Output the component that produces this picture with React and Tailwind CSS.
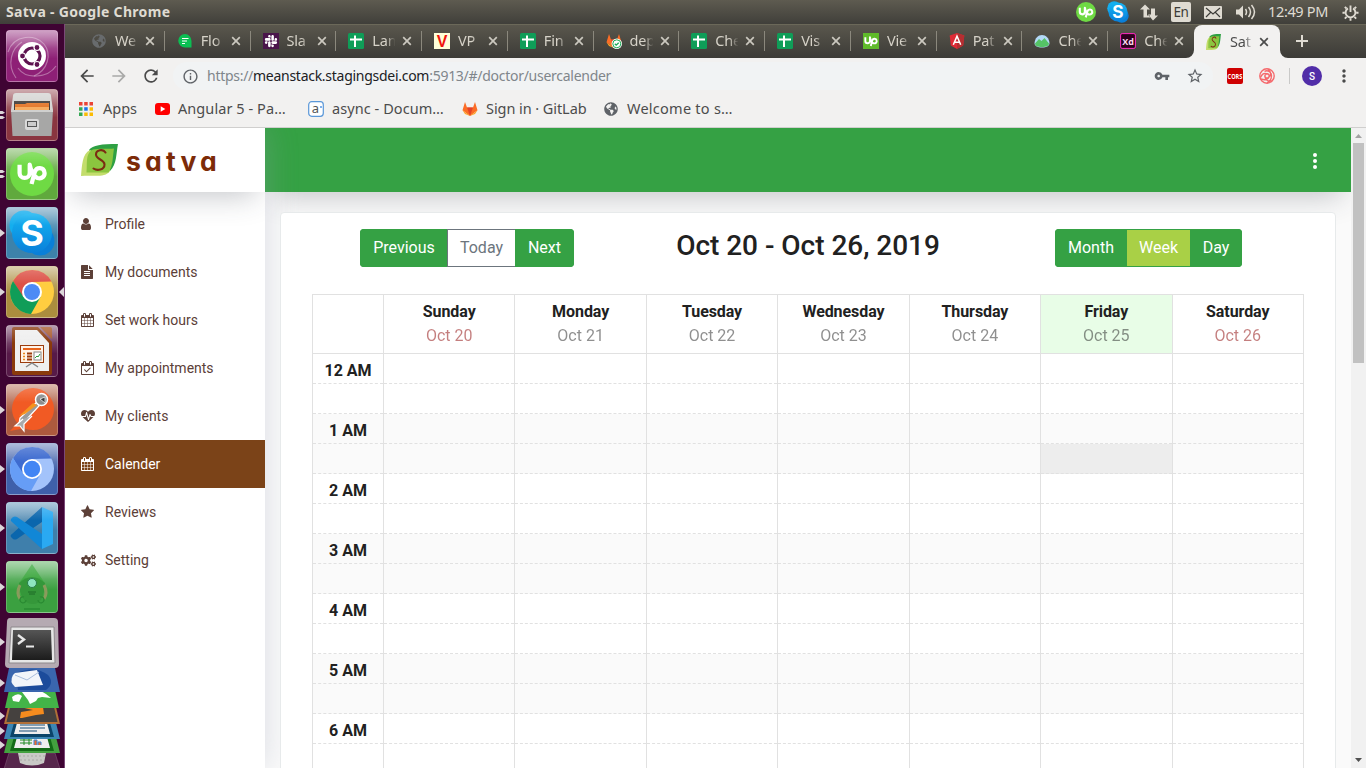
import React from "react";
import { FaSlack, FaCogs, FaGlobeAmericas } from "react-icons/fa";
import { MdArrowBack, MdArrowForward, MdRefresh, MdInfoOutline, MdVpnKey, MdStarBorder, MdMoreVert } from "react-icons/md";

const PATHS = {
  user: "M1536 1399q0 109-62.5 187t-150.5 78h-854q-88 0-150.5-78t-62.5-187q0-85 8.5-160.5t31.5-152 58.5-131 94-89 134.5-34.5q131 128 313 128t313-128q76 0 134.5 34.5t94 89 58.5 131 31.5 152 8.5 160.5zm-256-887q0 159-112.5 271.5t-271.5 112.5-271.5-112.5-112.5-271.5 112.5-271.5 271.5-112.5 271.5 112.5 112.5 271.5z",
  file: "M1596 476q14 14 28 36h-472v-472q22 14 36 28zm-476 164h544v1056q0 40-28 68t-68 28h-1344q-40 0-68-28t-28-68v-1600q0-40 28-68t68-28h800v544q0 40 28 68t68 28zm160 736v-64q0-14-9-23t-23-9h-704q-14 0-23 9t-9 23v64q0 14 9 23t23 9h704q14 0 23-9t9-23zm0-256v-64q0-14-9-23t-23-9h-704q-14 0-23 9t-9 23v64q0 14 9 23t23 9h704q14 0 23-9t9-23zm0-256v-64q0-14-9-23t-23-9h-704q-14 0-23 9t-9 23v64q0 14 9 23t23 9h704q14 0 23-9t9-23z",
  calendar: "M192 1664h288v-288h-288v288zm352 0h320v-288h-320v288zm-352-352h288v-320h-288v320zm352 0h320v-320h-320v320zm-352-384h288v-288h-288v288zm736 736h320v-288h-320v288zm-384-736h320v-288h-320v288zm768 736h288v-288h-288v288zm-384-352h320v-320h-320v320zm-352-864v-288q0-13-9.5-22.5t-22.5-9.5h-64q-13 0-22.5 9.5t-9.5 22.5v288q0 13 9.5 22.5t22.5 9.5h64q13 0 22.5-9.5t9.5-22.5zm736 864h288v-320h-288v320zm-384-384h320v-288h-320v288zm384 0h288v-288h-288v288zm32-480v-288q0-13-9.5-22.5t-22.5-9.5h-64q-13 0-22.5 9.5t-9.5 22.5v288q0 13 9.5 22.5t22.5 9.5h64q13 0 22.5-9.5t9.5-22.5zm384-64v1280q0 52-38 90t-90 38h-1408q-52 0-90-38t-38-90v-1280q0-52 38-90t90-38h128v-96q0-66 47-113t113-47h64q66 0 113 47t47 113v96h384v-96q0-66 47-113t113-47h64q66 0 113 47t47 113v96h128q52 0 90 38t38 90z",
  check: "M192 1664h1408v-1024h-1408v1024zm384-1216v-288q0-13-9.5-22.5t-22.5-9.5h-64q-13 0-22.5 9.5t-9.5 22.5v288q0 13 9.5 22.5t22.5 9.5h64q13 0 22.5-9.5t9.5-22.5zm768 0v-288q0-13-9.5-22.5t-22.5-9.5h-64q-13 0-22.5 9.5t-9.5 22.5v288q0 13 9.5 22.5t22.5 9.5h64q13 0 22.5-9.5t9.5-22.5zm384-64v1280q0 52-38 90t-90 38h-1408q-52 0-90-38t-38-90v-1280q0-52 38-90t90-38h128v-96q0-66 47-113t113-47h64q66 0 113 47t47 113v96h384v-96q0-66 47-113t113-47h64q66 0 113 47t47 113v96h128q52 0 90 38t38 90zM1303 935l-512 512q-10 9-23 9t-23-9l-288-288q-9-10-9-23t9-22l46-46q9-9 22-9t23 9l220 220 444-444q10-9 23-9t22 9l46 46q9 9 9 22t-9 23z",
  star: "M1728 647q0 22-26 48l-363 354 86 500q1 7 1 20 0 21-10.5 35.5t-30.5 14.5q-19 0-40-12l-449-236-449 236q-22 12-40 12-21 0-31.5-14.5t-10.5-35.5q0-6 2-20l86-500-364-354q-25-27-25-48 0-37 56-46l502-73 225-455q19-41 49-41t49 41l225 455 502 73q56 9 56 46z",
  heart: "M1280 1024h305q-5 6-10 10.5t-9 7.5l-3 4-623 600q-18 18-44 18t-44-18l-624-602q-5-2-21-20h369q22 0 39.5-13.5t22.5-34.5l70-281 190 667q6 20 23 33t39 13q21 0 38-13t23-33l146-485 56 112q18 35 57 35zm512-428q0 145-103 300h-369l-111-221q-8-17-25.5-27t-36.5-8q-45 5-56 46l-129 430-196-686q-6-20-23.5-33t-39.5-13-39 13.5-22 34.5l-116 464h-423q-103-155-103-300 0-220 127-344t351-124q62 0 126.5 21.5t120 58 95.5 68.5 76 68q36-36 76-68t95.5-68.5 120-58 126.5-21.5q224 0 351 124t127 344z",
};

const VIEW = {
  user: "256 0 1792 1792",
  file: "128 0 1792 1792",
  calendar: "64 0 1792 1792",
  check: "64 0 1792 1792",
  star: "64 0 1792 1792",
  heart: "0 0 1792 1792",
};

function MenuIcon({ name }) {
  if (name === "cogs") return <FaCogs className="h-[15px] w-[15px]" />;
  return (
    <svg viewBox={VIEW[name]} className="h-[14px] w-[14px]" fill="currentColor" fillRule="evenodd">
      <path d={PATHS[name]} />
    </svg>
  );
}

/* ---------- favicons ---------- */

function Leaf({ className }) {
  return (
    <svg viewBox="0 0 37 32" className={className} preserveAspectRatio="none">
      <path d="M8 6C12 1 20 0 37 0C35 10 36 20 29 27L12 24Z" fill="#2ea043" />
      <path d="M0 32C1 22 1 10 9 6L24 14L29 27C24 34 14 31 0 32Z" fill="#c3dd6c" />
      <path d="M5.500 28.500C6.500 20 4 9 12 5.500C18 4 26 5 33 4.500C31.500 14 32 22 27.500 28.500Z" fill="#8bc53f" />
      <path d="M24.500 8.500C22 4.500 15 6 15 10.500C15 15.500 23.500 15.500 23.500 20.500C23.500 26 16 27 12.500 24.500" fill="none" stroke="#7c2b12" strokeWidth="2.100" strokeLinecap="round" />
    </svg>
  );
}

const Sheets = () => (
  <svg viewBox="0 0 16 16" className="h-4 w-4">
    <rect width="16" height="16" rx="1.500" fill="#0f9d58" />
    <path d="M2 6.500h12M7 2.500v11.500" stroke="#fff" strokeWidth="2" />
  </svg>
);

function Favicon({ kind }) {
  switch (kind) {
    case "globe":
      return <FaGlobeAmericas className="h-[14px] w-[14px] text-[#686b6d]" />;
    case "chat":
      return (
        <svg viewBox="0 0 16 16" className="h-4 w-4">
          <path d="M8 1a6.700 6.700 0 1 0 0 13.500H14.500V8A6.700 6.700 0 0 0 8 1z" fill="#0bbf53" />
          <path d="M5 5.500h6.500M5 8h5M5 10.500h3" stroke="#fff" strokeWidth="1.200" />
        </svg>
      );
    case "slack":
      return (
        <span className="flex h-4 w-4 items-center justify-center bg-[#4a154b] text-white">
          <FaSlack className="h-[14px] w-[14px]" />
        </span>
      );
    case "sheets":
      return <Sheets />;
    case "vp":
      return (
        <svg viewBox="0 0 16 16" className="h-4 w-4">
          <rect width="16" height="16" fill="#ffffd9" />
          <text x="8" y="14" textAnchor="middle" fontFamily="Liberation Sans" fontWeight="bold" fontSize="16" fill="#f0140c">V</text>
        </svg>
      );
    case "gitlab":
      return <GitLab check />;
    case "up":
      return (
        <svg viewBox="0 0 16 16" className="h-4 w-4">
          <rect width="16" height="16" fill="#5fbb2a" />
          <UpMark x={8} y={7.5} s={0.42} />
        </svg>
      );
    case "angular":
      return (
        <svg viewBox="0 0 16 16" className="h-4 w-4">
          <path d="M8 0L15.300 2.600L14.200 12.500L8 16L1.800 12.500L.7 2.600z" fill="#dd2b36" />
          <path d="M8 0L15.300 2.600L14.200 12.500L8 16z" fill="#b52e31" />
          <path d="M4.300 11.800L8 3.200l3.700 8.600M5.800 9.300h4.400" fill="none" stroke="#fff" strokeWidth="1.500" />
        </svg>
      );
    case "mountain":
      return (
        <svg viewBox="0 0 16 16" className="h-4 w-4">
          <path d="M.5 10C1 5 4 2 8 2s7 3 7.500 8c0 3-3 4.500-7.500 4.500S.5 13 .5 10z" fill="#b3d9f7" />
          <path d="M1 10.500L5 6l2.500 2L10.500 5L15 10.500c0 2.500-3 3.500-7 3.500s-7-1-7-3.500z" fill="#55c366" />
        </svg>
      );
    case "xd":
      return (
        <svg viewBox="0 0 16 16" className="h-4 w-4">
          <rect x=".6" y=".6" width="14.800" height="14.800" rx="1.500" fill="#2e001e" stroke="#ff2bc2" />
          <text x="8" y="11.500" textAnchor="middle" fontFamily="Open Sans" fontWeight="bold" fontSize="9" fill="#ffd9f2">Xd</text>
        </svg>
      );
    default:
      return <Leaf className="h-4 w-[15px]" />;
  }
}

function GitLab({ check }) {
  return (
    <svg viewBox="0 0 16 16" className="h-4 w-4">
      <path d="M8 15L.5 9.300L3 1l2 5.500h6L13 1l2.500 8.300z" fill="#fc6d26" />
      <path d="M8 15L5 6.500h6z" fill="#e24329" />
      <path d="M.5 9.300L3 13 8 15zM15.500 9.300L13 13 8 15z" fill="#fca326" />
      {check && (
        <>
          <circle cx="10.800" cy="10.800" r="5.200" fill="#fff" />
          <circle cx="10.800" cy="10.800" r="4" fill="#fff" stroke="#1aaa55" strokeWidth="1" />
          <path d="M8.800 10.800l1.400 1.400 2.500-2.500" fill="none" stroke="#1aaa55" strokeWidth="1.300" />
        </>
      )}
    </svg>
  );
}

function UpMark({ x, y, s }) {
  return (
    <g transform={`translate(${x} ${y}) scale(${s})`} fill="none" stroke="#fff" strokeWidth="4.600" strokeLinecap="butt">
      <path d="M-13.500-8V1a5.500 5.500 0 0 0 11 0V-8C-1.500-2 2 5 6 6.500C11 8 14.500 4 13.500 0C12.500-5 5-6 3 0L-.5 13" strokeLinejoin="round" />
    </g>
  );
}

function SkypeMark() {
  return (
    <>
      <circle cx="18" cy="18" r="14.500" fill="#14aeee" />
      <circle cx="34" cy="34" r="14.500" fill="#0a7fd8" />
      <circle cx="26" cy="26" r="20" fill="url(#skype)" />
      <text x="26" y="39" textAnchor="middle" fontFamily="Inter" fontWeight="700" fontSize="36" fill="#fff">S</text>
    </>
  );
}

/* ---------- desktop launcher ---------- */

const TILES = [
  { bg: "bg-[#8e2076]", marks: 0, art: "ubuntu" },
  { bg: "bg-[#8a3540]", marks: 2, art: "files" },
  { bg: "bg-[#60a93d]", marks: 2, art: "upwork" },
  { bg: "bg-[#3d82aa]", marks: 1, art: "skype" },
  { bg: "bg-[#ab8d3e]", marks: 1, art: "chrome", active: true },
  { bg: "bg-[#571a48]", marks: 0, art: "impress" },
  { bg: "bg-[#ad5a3e]", marks: 1, art: "postman" },
  { bg: "bg-[#3f60aa]", marks: 1, art: "chromium" },
  { bg: "bg-[#3f7fab]", marks: 1, art: "code" },
  { bg: "bg-[#3ba040]", marks: 1, art: "robot" },
];

function Art({ kind }) {
  switch (kind) {
    case "ubuntu":
      return (
        <>
          <g fill="none" stroke="#fff" strokeOpacity=".35" strokeWidth="1.200">
            <path d="M2 22C8 4 30 4 38 14S42 40 28 46" />
            <path d="M10 48C0 34 6 18 16 12" />
            <path d="M50 36C42 48 20 50 12 38" />
          </g>
          <circle cx="26" cy="26" r="14" fill="#fff" />
          <circle cx="26" cy="26" r="8" fill="none" stroke="#5e1350" strokeWidth="3.200" />
          <g fill="#5e1350" stroke="#fff" strokeWidth="1.200"><circle cx="16.500" cy="26" r="3" /><circle cx="31" cy="17.500" r="3" /><circle cx="31" cy="34.500" r="3" /></g>
        </>
      );
    case "files":
      return (
        <>
          <path d="M7 7Q7 4 10 4h32q3 0 3 3l2 14H5z" fill="#d6d6d4" />
          <rect x="8" y="12" width="36" height="11" fill="#44403d" />
          <path d="M9 15h10l2-1h22v9H9z" fill="#e57a2e" />
          <path d="M9 18h34v4H9z" fill="#f7ad61" />
          <path d="M5 21h42l-1.500 26h-39z" fill="#a7a7a6" />
          <path d="M5 21h42v2H5z" fill="#d0d0ce" />
          <rect x="19" y="30" width="14" height="11" rx="2" fill="#d9d9d9" />
          <rect x="21.500" y="32.500" width="9" height="5" fill="#ccc" stroke="#555" />
        </>
      );
    case "upwork":
      return (
        <>
          <circle cx="26" cy="26" r="22" fill="#6fda44" />
          <UpMark x={26} y={24} s={0.92} />
        </>
      );
    case "skype":
      return <SkypeMark />;
    case "chrome":
      return (
        <>
          <circle cx="26" cy="26" r="22" fill="#ffcd40" />
          <path d="M7 15A22 22 0 0 1 45.500 15.500L26 16L16 31z" fill="#dd5147" />
          <path d="M7 15A22 22 0 0 0 25 48L34.500 31L17.500 31z" fill="#109d58" />
          <circle cx="26" cy="26" r="10" fill="#fff" /><circle cx="26" cy="26" r="8" fill="#4c8bf5" />
        </>
      );
    case "chromium":
      return (
        <>
          <circle cx="26" cy="26" r="22" fill="#a3c3fb" />
          <path d="M7 15A22 22 0 0 1 45.500 15.500L26 16L16 31z" fill="#3d6bd0" />
          <path d="M7 15A22 22 0 0 0 25 48L34.500 31L17.500 31z" fill="#669df6" />
          <circle cx="26" cy="26" r="10" fill="#fff" /><circle cx="26" cy="26" r="8.200" fill="#4285f4" />
        </>
      );
    case "impress":
      return (
        <>
          <path d="M6 4Q6 2 8 2h24l14 15v31q0 2-2 2H8q-2 0-2-2z" fill="#8a3a0c" />
          <path d="M34 2h10q2 0 2 2v10z" fill="#a85a2c" />
          <path d="M9 5h22l12 13v28H9z" fill="#efefef" />
          <rect x="14.500" y="20.500" width="23" height="17" fill="#fff3e8" stroke="#9c3c0d" />
          <path d="M17 24h18" stroke="#e8641b" strokeWidth="2" />
          <path d="M17 28.500h2M17 31.500h2M17 34.500h2" stroke="#e8861b" strokeWidth="1.500" />
          <path d="M21 28.500h5M21 31.500h5M21 34.500h5" stroke="#9c3c0d" strokeWidth="2" />
          <rect x="28" y="27" width="7" height="8" fill="#fff" stroke="#888" />
          <path d="M29 33l2-2 1 1 2-3" stroke="#2a9d3a" fill="none" />
          <path d="M20 42l6-4 6 4" fill="none" stroke="#888" strokeWidth="1.500" />
        </>
      );
    case "postman":
      return (
        <>
          <circle cx="27" cy="25" r="21" fill="#f15a24" /><path d="M4 47L14 36l6 8z" fill="#f15a24" />
          <path d="M31 18L14 34l-1 6 7-4 13-14z" fill="#9b9b9b" stroke="#fff" strokeWidth="1.300" />
          <path d="M27 19L13 32l6-2 12-9z" fill="#f7931e" />
          <path d="M17 35l-8 7 5 0 4 5 0-7 8-8" fill="#aaa" stroke="#fff" strokeWidth="1.200" />
          <circle cx="35.500" cy="15.500" r="6" fill="#8c8c8c" stroke="#fff" strokeWidth="1.500" />
          <path d="M34 15l5-2v6z" fill="#333" stroke="#eee" strokeWidth=".8" />
        </>
      );
    case "code":
      return (
        <>
          <path d="M36 5v15L11 37q-2 1-4 0l-2-2q-1-2 1-3z" fill="#0a66ad" />
          <path d="M36 47V32L11 15q-2-1-4 0l-2 2q-1 2 1 3z" fill="#1187d6" />
          <path d="M36 5L47 10v32L36 47z" fill="#2aa9f2" />
        </>
      );
    default:
      return (
        <>
          <path d="M26 3L12 24a14 18 0 0 0 28 0z" fill="#43ab46" />
          <path d="M13 22q1 20 13 21t13-21q-13-12-26 0z" fill="#35973a" />
          <path d="M14 24q-4 8 0 14M38 24q4 8 0 14" fill="none" stroke="#8a9b5c" strokeWidth="3" />
          <circle cx="26" cy="22" r="4.500" fill="#8fe6c0" stroke="#2a7e4c" />
          <path d="M22 31h8M23 33h6" stroke="#1f6b27" />
          <path d="M18 36a3 3 0 1 0 2 3M34 36a3 3 0 1 1-2 3M18 48h16" fill="none" stroke="#2a8a32" strokeWidth="1.300" />
        </>
      );
  }
}

function Marks({ n }) {
  if (!n) return <span className="w-[6px] shrink-0" />;
  return (
    <svg viewBox="0 0 6 10" className="h-[10px] w-[6px] shrink-0" fill="#dcd6d9">
      {n === 1 ? <path d="M0 1L5 5L0 9z" /> : <path d="M0 1h2.500L5 2.800L2.500 4H0zM0 6h2.500L5 7.500L2.500 9H0z" />}
    </svg>
  );
}

function Launcher() {
  return (
    <div className="flex w-[65px] shrink-0 flex-col overflow-hidden border-r border-[#7a4877] bg-[#3f0433] pt-[6px]">
      <svg className="absolute h-0 w-0">
        <defs>
          <linearGradient id="skype" x1="0" y1="0" x2="0" y2="1"><stop offset="0" stopColor="#14b4f2" /><stop offset="1" stopColor="#0a80da" /></linearGradient>
          <linearGradient id="screen" x1="0" y1="0" x2="0" y2="1"><stop offset="0" stopColor="#555" /><stop offset="1" stopColor="#1c1c1c" /></linearGradient>
        </defs>
      </svg>
      {TILES.map((t) => (
        <div key={t.art} className="mb-[7px] flex h-[52px] shrink-0 items-center">
          <Marks n={t.marks} />
          <div className={"relative h-[52px] w-[52px] shrink-0 overflow-hidden rounded-[4px] " + t.bg}>
            <div className="absolute inset-0 bg-linear-to-b from-white/45 to-transparent to-55%" />
            <svg viewBox="0 0 52 52" className="relative h-full w-full"><Art kind={t.art} /></svg>
            <div className="absolute inset-0 rounded-[4px] border border-white/20 bg-linear-to-b from-white/25 to-transparent to-35%" />
          </div>
          {t.active && <svg viewBox="0 0 6 10" className="h-[10px] w-[6px] shrink-0" fill="#dcd6d9"><path d="M6 0L1 5L6 10z" /></svg>}
        </div>
      ))}
      <svg viewBox="0 0 64 150" className="-mt-[2px] h-[150px] w-[64px] shrink-0">
        <g fill="#dcd6d9"><path d="M0 20l5 4-5 4zM0 61l5 4-5 4zM0 94l5 4-5 4zM0 109l5 4-5 4zM0 123l5 4-5 4z" /></g>
        <path d="M9 135h46l5 16H4z" fill="#57274c" stroke="#7a4c70" strokeWidth=".7" />
        <path d="M18 135h28l-2 10q-12 5-24 0z" fill="#c9c9c6" />
        <path d="M19 138h26M20 142h24" stroke="#a9a9a6" strokeDasharray="2 2" />
        <path d="M8 119h48l4 16H4z" fill="#43a13f" />
        <path d="M14 119h36l4 14H10z" fill="#136b17" /><path d="M17 119h30l3 11H14z" fill="#eee" />
        <path d="M20 122h12M20 125h12M24 119v8M29 119v8" stroke="#218a25" />
        <path d="M34 127v-5h3v5M38 127v-3h3v3" fill="#e86b2c" stroke="#3b86d8" />
        <path d="M8 105h48l4 16H4z" fill="#3b86b4" />
        <path d="M14 105h36l4 14H10z" fill="#0b4468" /><path d="M17 105h30l3 11H14z" fill="#eee" />
        <path d="M20 107h25M20 110h25M19 113h18" stroke="#174f78" strokeWidth="1.200" />
        <path d="M8 89h48l4 17H4z" fill="#b06f37" /><path d="M10 89h44l3.500 15h-51z" fill="#45413f" />
        <path d="M20 89h23l1 7-8 1-14 3-2 0 1-6 12-2z" fill="#f68b1e" />
        <path d="M9 72h46l4 18H5z" fill="#43b448" />
        <path d="M12 79q6-5 10-1l-3 6-6-1zM22 74q14-5 24 2l5 4-9-1-4 1-2 3-6 3-2-4z" fill="#fff" />
        <path d="M9 50h46l5 24H4z" fill="#3a66ae" />
        <path d="M16 55q20-8 32 2 7 8-2 15H18z" fill="#1c4b9b" />
        <path d="M15 55l22-3 6 15-28 2q-6-5-2-12z" fill="#f2f5fa" /><path d="M15 57l12 5 12-8" fill="none" stroke="#a9bddd" />
        <path d="M10 0h44q4 0 4 4l1 42q0 4-4 4H9q-4 0-4-4L7 4q0-4 3-4z" fill="#b5aab2" />
        <path d="M11 9h43l1 36H9z" fill="#e6e6e6" stroke="#8d888c" />
        <path d="M13 12h38l1 30H12z" fill="url(#screen)" />
        <path d="M18 17l6 4.500-6 4.500" fill="none" stroke="#e8e8e8" strokeWidth="2.400" /><path d="M26 28.500h8" stroke="#e8e8e8" strokeWidth="2" />
      </svg>
    </div>
  );
}

/* ---------- top panel ---------- */

function TopPanel() {
  return (
    <div className="flex h-6 shrink-0 items-center justify-between bg-linear-to-b from-[#5e5b50] to-[#403f3a] pr-[7px] pl-[6px] font-['Noto_Sans',sans-serif] text-[#dfdbd2]">
      <span className="-mt-[2px] text-[14px] font-bold tracking-[0.310px] whitespace-nowrap">Satva - Google Chrome</span>
      <div className="flex h-6 items-center">
        <svg viewBox="0 0 20 20" className="-mt-px mr-[1px] h-5 w-5"><circle cx="10" cy="10" r="10" fill="#6fda44" /><UpMark x={10} y={9.4} s={0.46} /></svg>
        <svg viewBox="3 3 46 46" className="ml-[10px] h-[22px] w-[22px]"><SkypeMark /></svg>
        <svg viewBox="0 0 18 18" className="ml-[11px] h-[18px] w-[18px]" fill="#dfdbd2"><path d="M5 1l5 5H7v6h3v2H3.500V6H0zM13 17l5-5h-3V5h-4v6H8z" transform="translate(0 .5)" /></svg>
        <span className="ml-[13px] flex h-5 w-5 items-center justify-center rounded-[2px] bg-[#dfdbd2] text-[13.500px] tracking-[-0.500px] text-[#3c3b37]">En</span>
        <svg viewBox="0 0 18 13" className="ml-[13px] h-[13px] w-[18px]"><rect width="18" height="13" rx="1" fill="#dfdbd2" /><path d="M2 2l7 6 7-6M2 11l4.500-4.500M16 11l-4.500-4.500" fill="none" stroke="#3c3b37" strokeWidth="1.100" /></svg>
        <svg viewBox="0 0 20 16" className="ml-[14px] h-4 w-5"><path d="M0 5.500h3l4-4v13l-4-4H0z" fill="#dfdbd2" /><path d="M9.500 5q2 3 0 6M12.500 3q4 5 0 10M15.500 1q6 7 0 14" fill="none" stroke="#dfdbd2" strokeWidth="1.500" /></svg>
        <span className="ml-[12px] w-[62px] text-[14.500px] tracking-[-0.350px] whitespace-nowrap">12:49 PM</span>
        <svg viewBox="0 0 18 18" className="ml-[12px] h-[17px] w-[17px]" fill="none" stroke="#dfdbd2">
          <path d="M6.300 4.600a5.200 5.200 0 1 0 5.400 0M9 1.500v7" strokeWidth="2" />
          <path d="M3 3l1.800 1.800M15 3l-1.800 1.800M.5 9.200H3M15 9.200h2.500M3 15.400l1.800-1.800M15 15.400l-1.800-1.800M9 15.200v2.500" strokeWidth="2" />
        </svg>
      </div>
    </div>
  );
}

/* ---------- browser chrome ---------- */

const TABS = [
  ["globe", "We"], ["chat", "Flo"], ["slack", "Sla"], ["sheets", "Lan"], ["vp", "VP"], ["sheets", "Fin"], ["gitlab", "dep"],
  ["sheets", "Che"], ["sheets", "Vis"], ["up", "Vie"], ["angular", "Pat"], ["mountain", "Che"], ["xd", "Che"],
];

const Close = () => (
  <svg viewBox="0 0 10 10" className="h-[10px] w-[10px] shrink-0"><path d="M1.200 1.200l7.600 7.600M8.800 1.200L1.200 8.800" stroke="currentColor" strokeWidth="1.700" /></svg>
);

const LABEL = "-mr-[5px] w-[28px] shrink-0 whitespace-nowrap tracking-[-0.200px] [mask-image:linear-gradient(to_right,#000_50%,transparent_84%)] ";

function TabStrip() {
  return (
    <div className="flex h-[34px] shrink-0 border-t border-[#6b6859] bg-linear-to-b from-[#5a574d] to-[#3c3b37] pl-[14px] font-['Noto_Sans',sans-serif] text-[14.500px] text-[#d6d2c8]">
      {TABS.map(([icon, label], i) => (
        <div key={i} className="flex h-[32px] w-[85.770px] shrink-0 items-center pl-[12px]">
          <span className="flex w-4 shrink-0 justify-center"><Favicon kind={icon} /></span>
          <span className={LABEL + "ml-[8px]"}>{label}</span>
          <span className="ml-[7px] flex text-[#cbc8bf]"><Close /></span>
          <span className={"ml-auto h-5 w-px " + (i < 12 ? "bg-[#8b887d]" : "")} />
        </div>
      ))}
      <div className="relative flex h-[33px] w-[86px] shrink-0 items-center rounded-t-[8px] bg-[#f2f1f0] pl-[12px] text-[#4c4c4c]">
        <svg viewBox="0 0 8 8" className="absolute bottom-0 -left-2 h-2 w-2"><path d="M8 0v8H0a8 8 0 0 0 8-8z" fill="#f2f1f0" /></svg>
        <svg viewBox="0 0 8 8" className="absolute -right-2 bottom-0 h-2 w-2"><path d="M0 0v8h8a8 8 0 0 1-8-8z" fill="#f2f1f0" /></svg>
        <Favicon kind="leaf" />
        <span className={LABEL + "ml-[9px]"}>Sat</span>
        <span className="ml-[6px] flex"><Close /></span>
      </div>
      <svg viewBox="0 0 12 12" className="mt-[10px] ml-[16px] h-3 w-3"><path d="M6 0v12M0 6h12" stroke="#dfdbd2" strokeWidth="2" /></svg>
    </div>
  );
}

function Toolbar() {
  return (
    <div className="flex h-[36px] shrink-0 items-center bg-[#f2f1f0] pl-[12px] text-[#4a4a4a]">
      <MdArrowBack className="h-5 w-5" />
      <MdArrowForward className="ml-[12px] h-5 w-5 text-[#a9a9a8]" />
      <MdRefresh className="ml-[12px] h-5 w-5" />
      <div className="ml-[12px] flex h-7 w-[1040px] items-center rounded-full bg-[#f1f3f4] pr-[9px] pl-[9px] font-['Noto_Sans',sans-serif]">
        <MdInfoOutline className="h-[17px] w-[17px] text-[#5f6368]" />
        <span className="ml-[8px] -mt-[2px] text-[14px] tracking-[-0.275px] whitespace-nowrap text-[#80868b]">
          https://<span className="text-[#202124]">meanstack.stagingsdei.com</span>:5913/#/doctor/usercalender
        </span>
        <MdVpnKey className="mr-[16px] ml-auto h-4 w-4 text-[#5f6368]" />
        <MdStarBorder className="h-[18px] w-[18px] text-[#5f6368]" />
      </div>
      <svg viewBox="0 0 16 16" className="ml-[14px] h-4 w-4">
        <rect width="16" height="16" rx="2" fill="#cf0000" />
        <text x="8" y="7.900" textAnchor="middle" transform="scale(1 1.400)" fontFamily="Open Sans" fontWeight="bold" fontSize="5.600" fill="#fff">CORS</text>
      </svg>
      <svg viewBox="0 0 16 16" className="ml-[16px] h-4 w-4" fill="none" stroke="#f5696c" strokeWidth="1.400">
        <circle cx="8" cy="8" r="7.200" />
        <path d="M8 5.800a2.200 2.200 0 0 1 2 3.200M8 5.800C5 4.500 3 6 1.500 9.500M10 9c2.500-2 2-5-1-8M10 9c-1.500 3-4 3.500-8 2M6 9c-.5-1.500.5-3 2-3.200M6 9c.5 3 3 4.500 7 4M6 9c1 1.500 3 1.500 4 0M5.500 3.300c3-1.500 7 0 7 4.500s-2 6-4.500 7" />
      </svg>
      <span className="ml-[14px] h-4 w-px bg-[#c9c9c8]" />
      <span className="ml-[12px] flex h-5 w-5 items-center justify-center rounded-full bg-[#512da8] font-['Roboto',sans-serif] text-[10px] font-medium text-white">S</span>
      <MdMoreVert className="ml-[12px] h-5 w-5" />
    </div>
  );
}

function Bookmarks() {
  return (
    <div className="flex h-[34px] shrink-0 items-center border-b border-[#d0cfce] bg-[#f2f1f0] pb-[3px] pl-[14px] font-['Noto_Sans',sans-serif] text-[14.500px] whitespace-nowrap text-[#4c4c4c]">
      <svg viewBox="0 0 14 14" className="h-[14px] w-[14px]">
        <path d="M0 0h3.500v3.500H0zM5.200 0h3.500v3.500H5.200zM10.500 0H14v3.500h-3.500z" fill="#ea4335" />
        <path d="M0 5.200h3.500v3.500H0zM0 10.500h3.500V14H0z" fill="#34a853" /><path d="M5.200 5.200h3.500v3.500H5.200z" fill="#1a73e8" /><path d="M10.500 5.200H14v3.500h-3.500zM5.200 10.500h3.500V14H5.200zM10.500 10.500H14V14h-3.500z" fill="#fbbc04" />
      </svg>
      <span className="ml-[10px] w-[36px]">Apps</span>
      <svg viewBox="0 0 15 12" className="ml-[16px] h-3 w-[15px]"><rect width="15" height="12" rx="3" fill="#f00" /><path d="M5.700 3.300v5.400L10.300 6z" fill="#fff" /></svg>
      <span className="ml-[8px] w-[108px] tracking-[0.070px]">Angular 5 - Pa…</span>
      <svg viewBox="0 0 16 16" className="ml-[22px] h-4 w-4"><rect x=".7" y=".7" width="14.600" height="14.600" rx="3" fill="#fff" stroke="#5a97d8" strokeWidth="1.200" /><text x="7.500" y="12" textAnchor="middle" fontFamily="Noto Sans" fontSize="13" fill="#555">a</text><path d="M13 5v2" stroke="#4a90e2" strokeWidth="1.400" /></svg>
      <span className="ml-[8px] w-[112px] tracking-[0.070px]">async - Docum…</span>
      <span className="ml-[18px]"><GitLab /></span>
      <span className="ml-[8px] w-[101px] tracking-[-0.070px]">Sign in · GitLab</span>
      <FaGlobeAmericas className="ml-[17px] h-[14px] w-[14px] text-[#5f6368]" />
      <span className="ml-[9px] tracking-[0.250px]">Welcome to s…</span>
    </div>
  );
}

/* ---------- application ---------- */

const MENU = [
  ["user", "Profile"], ["file", "My documents"], ["calendar", "Set work hours"], ["check", "My appointments"],
  ["heart", "My clients"], ["calendar", "Calender"], ["star", "Reviews"], ["cogs", "Setting"],
];

const DAYS = [
  ["Sunday", "Oct 20"], ["Monday", "Oct 21"], ["Tuesday", "Oct 22"], ["Wednesday", "Oct 23"],
  ["Thursday", "Oct 24"], ["Friday", "Oct 25"], ["Saturday", "Oct 26"],
];

const HOURS = ["12 AM", "1 AM", "2 AM", "3 AM", "4 AM", "5 AM", "6 AM"];

function Sidebar() {
  return (
    <aside className="relative z-20 flex w-[200px] shrink-0 flex-col overflow-visible bg-white shadow-[0_0_30px_0_rgba(154,161,185,0.32)]">
      <div className="flex h-16 w-[200px] shrink-0 items-center bg-white pl-[16px] shadow-[0_12px_30px_-9px_rgba(50,55,70,0.3)] [clip-path:inset(0_0_-60px_0)]">
        <Leaf className="h-8 w-[37px]" />
        <span className="mt-[2px] ml-[8px] font-['Inter',sans-serif] text-[26.500px] leading-none font-bold tracking-[4.200px] text-[#7c2b08] [font-feature-settings:'cv11']">satva</span>
      </div>
      <nav className="relative flex flex-col pt-2 text-[14px] text-[#5c4038]">
        {MENU.map(([icon, label]) => (
          <div key={label} className={"flex h-12 items-center pl-[16px] " + (label === "Calender" ? "bg-[#7b4318] text-white" : "")}>
            <span className="flex w-6"><MenuIcon name={icon} /></span>
            <span>{label}</span>
          </div>
        ))}
      </nav>
    </aside>
  );
}

function Calendar() {
  return (
    <div className="mx-[31px] mt-[27px] border border-[#e1e1e1]">
      <div className="flex h-[59px] border-b border-[#e1e1e1] text-center text-[16px] leading-6">
        <div className="w-[70px] shrink-0" />
        {DAYS.map(([day, date], i) => (
          <div key={day} className={"flex-1 border-l border-[#e1e1e1] pt-[5px] " + (day === "Friday" ? "bg-[#e8fde7]" : "")}>
            <div className="font-bold tracking-[-0.080px]">{day}</div>
            <div className={"opacity-50 " + (i % 6 === 0 ? "text-[#8b0000]" : "")}>{date}</div>
          </div>
        ))}
      </div>
      {HOURS.map((hour, h) => (
        <div key={hour} className={"flex h-[60px] " + (h % 2 ? "bg-[#fafafa]" : "bg-white")}>
          <div className="w-[70px] shrink-0 text-center text-[16px] leading-[34px] font-bold">
            <div className="h-[30px] border-b border-dashed border-[#e1e1e1]">{hour}</div>
            <div className="h-[30px] border-b border-dashed border-[#e1e1e1]" />
          </div>
          {DAYS.map(([day]) => (
            <div key={day} className="flex-1 border-l border-[#e1e1e1]">
              <div className="h-[30px] border-b border-dashed border-[#e1e1e1]" />
              <div className={"h-[30px] border-b border-dashed border-[#e1e1e1] " + (h === 1 && day === "Friday" ? "bg-[#ededed]" : "")} />
            </div>
          ))}
        </div>
      ))}
    </div>
  );
}

const BTN = "flex h-[38px] items-center justify-center border border-[#35a144] ";

export default function App() {
  return (
    <div className="flex h-[768px] w-[1366px] flex-col overflow-hidden bg-white">
      <TopPanel />
      <div className="flex h-[744px]">
        <Launcher />
        <div className="flex w-[1301px] flex-col">
          <TabStrip />
          <Toolbar />
          <Bookmarks />
          <div className="flex h-[640px] overflow-hidden font-['Roboto',sans-serif] text-[#212121]">
            <div className="flex w-[1286px] overflow-hidden bg-[#fafafa]">
              <Sidebar />
              <div className="flex w-[1086px] flex-col">
                <header className="relative z-10 flex h-16 shrink-0 items-center justify-end bg-[#35a144] pr-[34px] shadow-[0_12px_30px_-9px_rgba(50,55,70,0.3)]">
                  <svg viewBox="0 0 4 16" className="mt-[2px] h-4 w-1" fill="#fff"><circle cx="2" cy="2" r="2" /><circle cx="2" cy="8" r="2" /><circle cx="2" cy="14" r="2" /></svg>
                </header>
                <main className="relative z-30 mx-[15px] mt-5 h-[600px] w-[1056px] shrink-0 rounded-[4px] border border-[#e7eaeb] bg-white pt-4">
                  <div className="flex h-[38px] items-center pl-[79px] text-[16px] text-white">
                    <div className="flex w-[214px] overflow-hidden rounded-[4px] bg-[#35a144]">
                      <div className={BTN + "w-[87px] pl-px"}>Previous</div>
                      <div className="flex h-[38px] w-[68px] items-center justify-center border-y border-l border-[#6c757d] bg-white text-[#6c757d]">Today</div>
                      <div className={BTN + "w-[59px]"}>Next</div>
                    </div>
                    <h3 className="mb-1 flex w-[481px] justify-center pr-[13px] text-[28px] leading-8 font-medium tracking-[-0.030px] whitespace-nowrap text-[#212121]">Oct 20 - Oct 26, 2019</h3>
                    <div className="flex w-[187px] overflow-hidden rounded-[4px] bg-[#35a144]">
                      <div className={BTN + "w-[72px]"}>Month</div>
                      <div className="flex h-[38px] w-[63px] items-center justify-center border-y border-[#35a144] bg-[#a9d046]">Week</div>
                      <div className={BTN + "w-[52px]"}>Day</div>
                    </div>
                  </div>
                  <Calendar />
                </main>
              </div>
            </div>
            <div className="flex w-[15px] shrink-0 flex-col items-center bg-[#f1f1f1]">
              <svg viewBox="0 0 7 4" className="mt-[6px] mb-[5px] h-1 w-[7px] shrink-0" fill="#a3a3a3"><path d="M3.500 0L7 4H0z" /></svg>
              <div className="h-[220px] w-[11px] shrink-0 bg-[#c1c1c1]" />
              <svg viewBox="0 0 7 4" className="mt-auto mb-[6px] h-1 w-[7px] shrink-0" fill="#505050"><path d="M3.500 4L7 0H0z" /></svg>
            </div>
          </div>
        </div>
      </div>
    </div>
  );
}
